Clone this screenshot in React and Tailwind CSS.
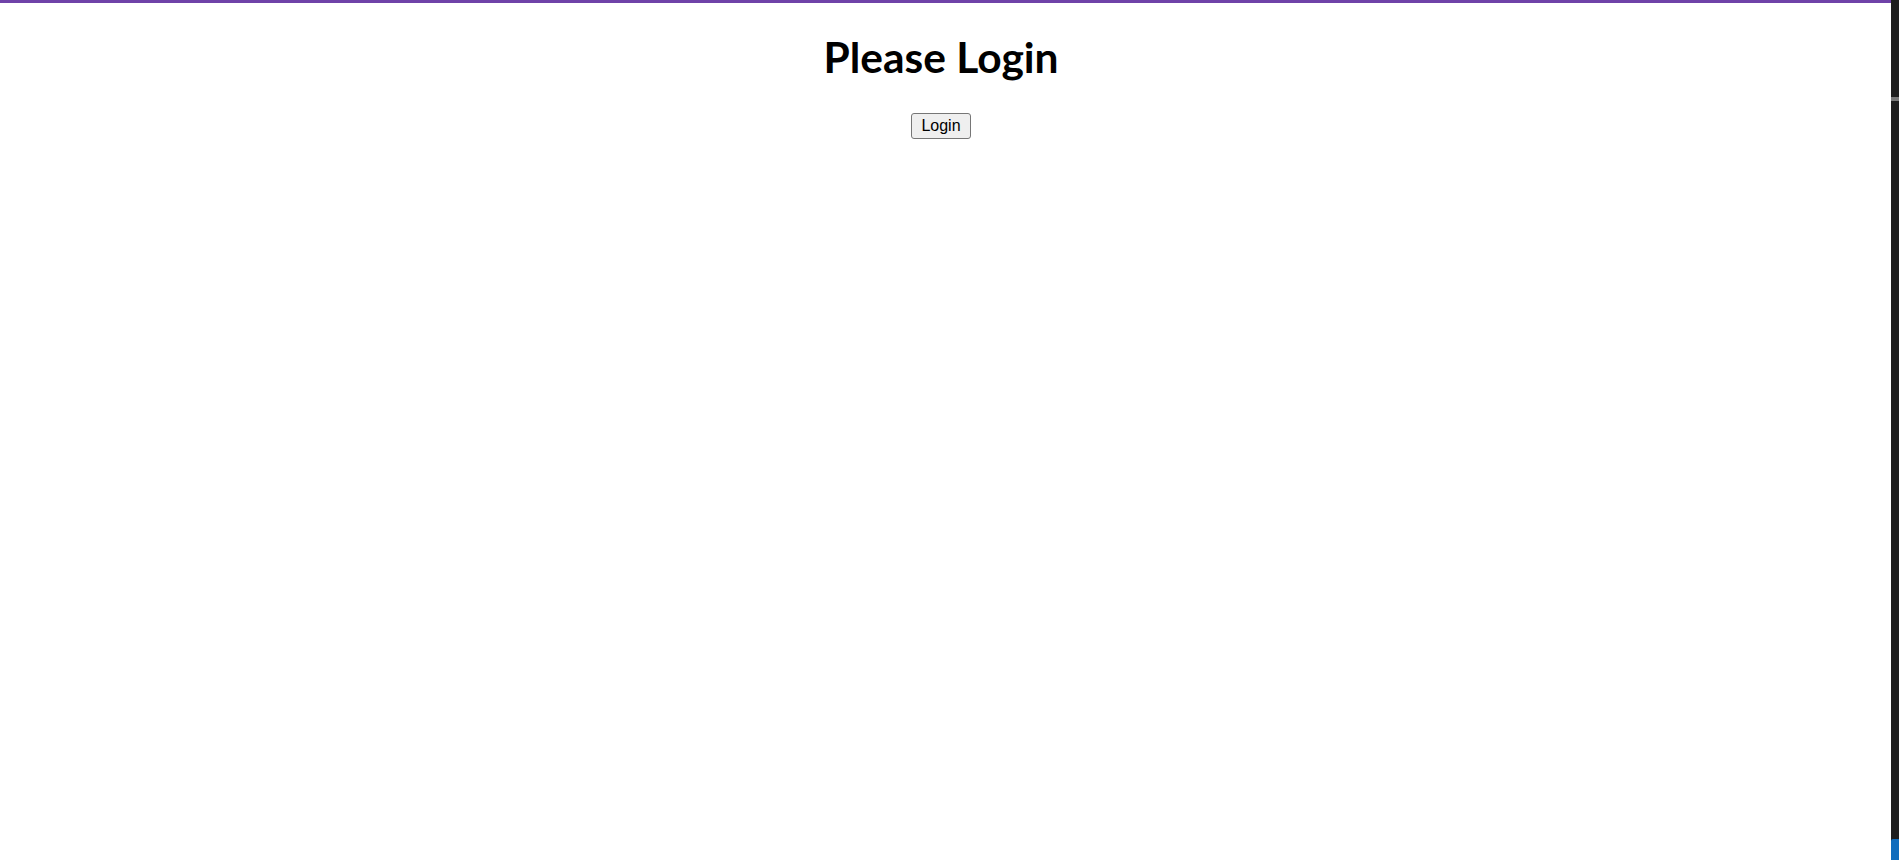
export default function App() {
  return (
    <div className="flex h-[860px] w-full overflow-hidden bg-white">
      <main className="flex w-[1891px] flex-col items-center border-t-[3px] border-[#6f42a8] pr-[9px]">
        <h1
          className="mt-[30px] text-[42.5px] font-bold leading-[48px] text-black"
          style={{ fontFamily: 'Lato, "Open Sans", sans-serif' }}
        >
          Please Login
        </h1>
        <button
          className="mt-[32px] h-[26px] rounded-[3px] border border-[#767676] bg-[#efefef] px-[9px] text-[16px] text-black"
          style={{ fontFamily: '"Liberation Sans", Arial, sans-serif' }}
        >
          Login
        </button>
      </main>
      <div className="flex w-[8px] flex-col bg-[#1e1e1e]">
        <div className="h-[97px]" />
        <div className="h-[4px] bg-[#7a7a7a]" />
        <div className="flex-1" />
        <div className="h-[21px] rounded-tl-[2px] bg-[#0f6cbd]" />
      </div>
    </div>
  );
}
